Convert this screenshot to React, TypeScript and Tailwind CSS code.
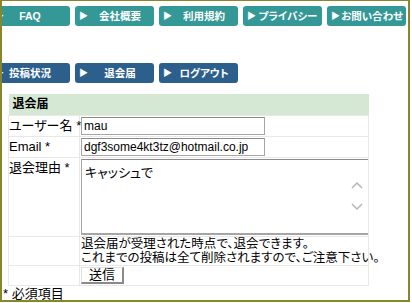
import React from 'react';

const topNav = ['FAQ', '会社概要', '利用規約', 'プライバシー', 'お問い合わせ'];
const userNav = ['投稿状況', '退会届', 'ログアウト'];

function NavButton({ label, color, first }: { label: string; color: string; first?: boolean }) {
  return (
    <div className={`flex h-[20px] w-[79px] shrink-0 items-center rounded-[3px] text-white ${color}`}>
      <span className="pl-[4px] text-[9px] leading-none">▶</span>
      <span className={`flex-1 text-center text-[10.5px] font-bold leading-none ${first ? 'pr-[14px]' : 'pr-[2px]'}`}>
        {label}
      </span>
    </div>
  );
}

const cell = 'border border-[#e8e8e8] p-0';
const field =
  'block h-[18px] w-[184px] border border-[#a5a5a5] border-t-[#8a8a8a] px-[2px] text-[12px] outline-none';

export default function App() {
  return (
    <div
      className="h-[302px] w-[410px] overflow-hidden border-b-2 border-l-2 border-r-2 border-t border-[#87872a] bg-white text-[13px] text-black [font-feature-settings:'palt']"
      style={{ fontFamily: '"Liberation Sans", "Noto Sans CJK JP", sans-serif' }}
    >
      <div className="ml-[-11px] mt-[5px] flex gap-[5px]">
        {topNav.map((l, i) => (
          <NavButton key={l} label={l} color="bg-[#339896]" first={i === 0} />
        ))}
      </div>

      <div className="ml-[-11px] mt-[37px] flex gap-[5px]">
        {userNav.map((l, i) => (
          <NavButton key={l} label={l} color="bg-[#2c5f8b]" first={i === 0} />
        ))}
      </div>

      <table className="ml-[6px] mt-[11px] w-[361px] table-fixed border-collapse">
        <colgroup>
          <col className="w-[71px]" />
          <col />
        </colgroup>
        <tbody>
          <tr>
            <td colSpan={2} className="h-[21px] bg-[#d5e8d3] p-0 pl-[4px] text-[12px] font-bold">
              退会届
            </td>
          </tr>
          <tr>
            <td className={`${cell} whitespace-nowrap`}>ユーザー名 *</td>
            <td className={`${cell} py-[1px] pl-[1px]`}>
              <input defaultValue="mau" className={field} />
            </td>
          </tr>
          <tr>
            <td className={cell}>Email *</td>
            <td className={`${cell} py-[1px] pl-[1px]`}>
              <input defaultValue="dgf3some4kt3tz@hotmail.co.jp" className={field} />
            </td>
          </tr>
          <tr>
            <td className={`${cell} align-top`}>退会理由 *</td>
            <td className={`${cell} py-[1px] pl-[1px]`}>
              <div className="flex h-[76px] w-[288px] border border-b-2 border-[#a5a5a5] border-t-[#8a8a8a]">
                <textarea
                  defaultValue="キャッシュで"
                  className="flex-1 resize-none overflow-hidden px-[3px] py-[3px] text-[13px] outline-none"
                />
                <div className="flex w-[22px] flex-col items-center justify-center gap-[14px] text-[#b5b5b5]">
                  <svg width="12" height="8" viewBox="0 0 12 8" fill="none" stroke="currentColor" strokeWidth="1.5">
                    <path d="M1 7 L6 2 L11 7" />
                  </svg>
                  <svg width="12" height="8" viewBox="0 0 12 8" fill="none" stroke="currentColor" strokeWidth="1.5">
                    <path d="M1 1 L6 6 L11 1" />
                  </svg>
                </div>
              </div>
            </td>
          </tr>
          <tr>
            <td className={cell}></td>
            <td className={`${cell} whitespace-nowrap pl-[1px] text-[12.5px]`}>
              <div className="h-[14px] leading-[14px]">退会届が受理された時点で、退会できます。</div>
              <div className="h-[14px] leading-[14px]">これまでの投稿は全て削除されますので、ご注意下さい。</div>
            </td>
          </tr>
          <tr>
            <td className={cell}></td>
            <td className={`${cell} py-[1px] pl-[1px]`}>
              <button className="block h-[17px] w-[43px] border border-b-2 border-r-2 border-[#e0e0e0] border-b-[#8a8a8a] border-r-[#8a8a8a] bg-white text-[13px] leading-none">
                送信
              </button>
            </td>
          </tr>
        </tbody>
      </table>

      <div className="pl-[1px] leading-[15px]">* 必須項目</div>
    </div>
  );
}
